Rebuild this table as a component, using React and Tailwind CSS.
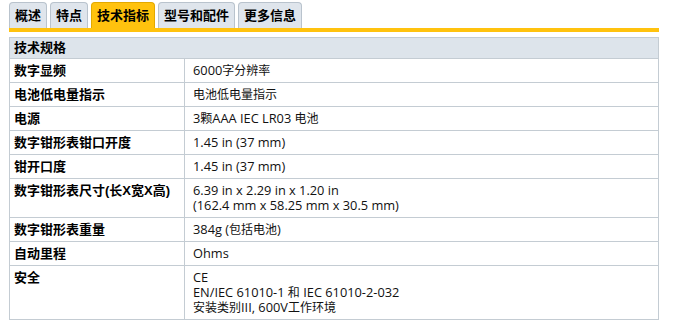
const tabs = ["概述", "特点", "技术指标", "型号和配件", "更多信息"];

// 中文片段字号略小
const Zh = ({ children }) => <span className="text-[12px]">{children}</span>;

const rows = [
  { label: "数字显频", lines: [<>6000<Zh>字分辨率</Zh></>] },
  { label: "电池低电量指示", lines: [<Zh>电池低电量指示</Zh>] },
  { label: "电源", lines: [<>3<Zh>颗</Zh>AAA IEC LR03 <Zh>电池</Zh></>] },
  { label: "数字钳形表钳口开度", lines: ["1.45 in (37 mm)"] },
  { label: "钳开口度", lines: ["1.45 in (37 mm)"] },
  {
    label: "数字钳形表尺寸(长X宽X高)",
    lines: ["6.39 in x 2.29 in x 1.20 in", "(162.4 mm x 58.25 mm x 30.5 mm)"],
  },
  { label: "数字钳形表重量", lines: [<>384g (<Zh>包括电池</Zh>)</>] },
  { label: "自动里程", lines: ["Ohms"] },
  {
    label: "安全",
    lines: [
      "CE",
      <>EN/IEC 61010-1 <Zh>和</Zh> IEC 61010-2-032</>,
      <><Zh>安装类别</Zh>III, 600V<Zh>工作环境</Zh></>,
    ],
  },
];

export default function App() {
  return (
    <div className="min-h-screen bg-white pl-[9px] pt-[2px] font-['Liberation_Sans','Noto_Sans_CJK_SC',sans-serif] text-black">
      {/* Tabs */}
      <div className="flex items-end gap-[3px]">
        {tabs.map((t) => (
          <div
            key={t}
            className={
              t === "技术指标"
                ? "h-[26px] flex items-center px-[5px] rounded-t-[4px] border border-b-0 border-[#e3a900] bg-[#ffc20e] text-[13px] font-bold"
                : "h-[26px] flex items-center px-[5px] rounded-t-[4px] border border-b-0 border-[#b9c3cd] bg-[#dfe5ec] text-[13px] font-bold"
            }
          >
            {t}
          </div>
        ))}
      </div>
      <div className="h-[4px] w-[650px] bg-[#ffc20e]" />

      {/* Spec table */}
      <table className="mt-[5px] w-[650px] border-collapse border border-[#c4ccd3]">
        <thead>
          <tr>
            <th
              colSpan={2}
              className="bg-[#dde4eb] border border-[#c4ccd3] px-[4px] py-[3px] text-left text-[13px] leading-[14px] font-bold"
            >
              技术规格
            </th>
          </tr>
        </thead>
        <tbody>
          {rows.map((r) => (
            <tr key={r.label}>
              <td className="w-[175px] align-top border border-[#c4ccd3] px-[4px] py-[4px] text-[13px] leading-[15px] font-bold whitespace-nowrap">
                {r.label}
              </td>
              <td className="align-top border border-[#c4ccd3] pl-[8px] py-[4px] text-[12.8px] leading-[15px] text-[#111] font-['Open_Sans','Noto_Sans_CJK_SC',sans-serif]">
                {r.lines.map((l, i) => (
                  <div key={i} className="h-[15px] whitespace-nowrap">
                    {l}
                  </div>
                ))}
              </td>
            </tr>
          ))}
        </tbody>
      </table>
    </div>
  );
}
